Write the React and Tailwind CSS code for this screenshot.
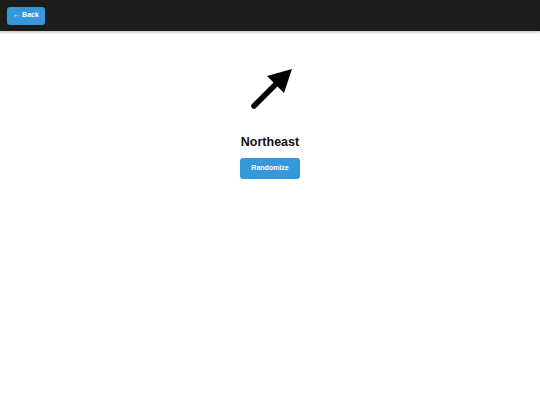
import React from 'react'

function Arrow() {
  return (
    <svg width="48" height="48" viewBox="0 0 48 48">
      <line x1="8" y1="40" x2="31" y2="17" stroke="#000" strokeWidth="5.5" strokeLinecap="round" />
      <polygon points="46,3 21,10 38,27" fill="#000" />
    </svg>
  )
}

export default function App() {
  return (
    <div className="min-h-screen bg-white font-['Liberation_Sans',Arial,sans-serif]">
      <header className="h-[31px] bg-[#1c1c1c] px-[7px] flex items-center shadow-[0_1px_3px_rgba(0,0,0,0.3)]">
        <button className="h-[18px] w-[38px] rounded-[3px] bg-[#3498db] text-white text-[7px] font-bold">
          ← Back
        </button>
      </header>
      <main className="flex flex-col items-center pt-[35px]">
        <Arrow />
        <h1 className="mt-[22px] text-[12.5px] font-bold text-[#111] leading-none">Northeast</h1>
        <button className="mt-[9px] h-[21px] w-[60px] rounded-[3px] bg-[#3498db] text-white text-[7px] font-bold">
          Randomize
        </button>
      </main>
    </div>
  )
}
